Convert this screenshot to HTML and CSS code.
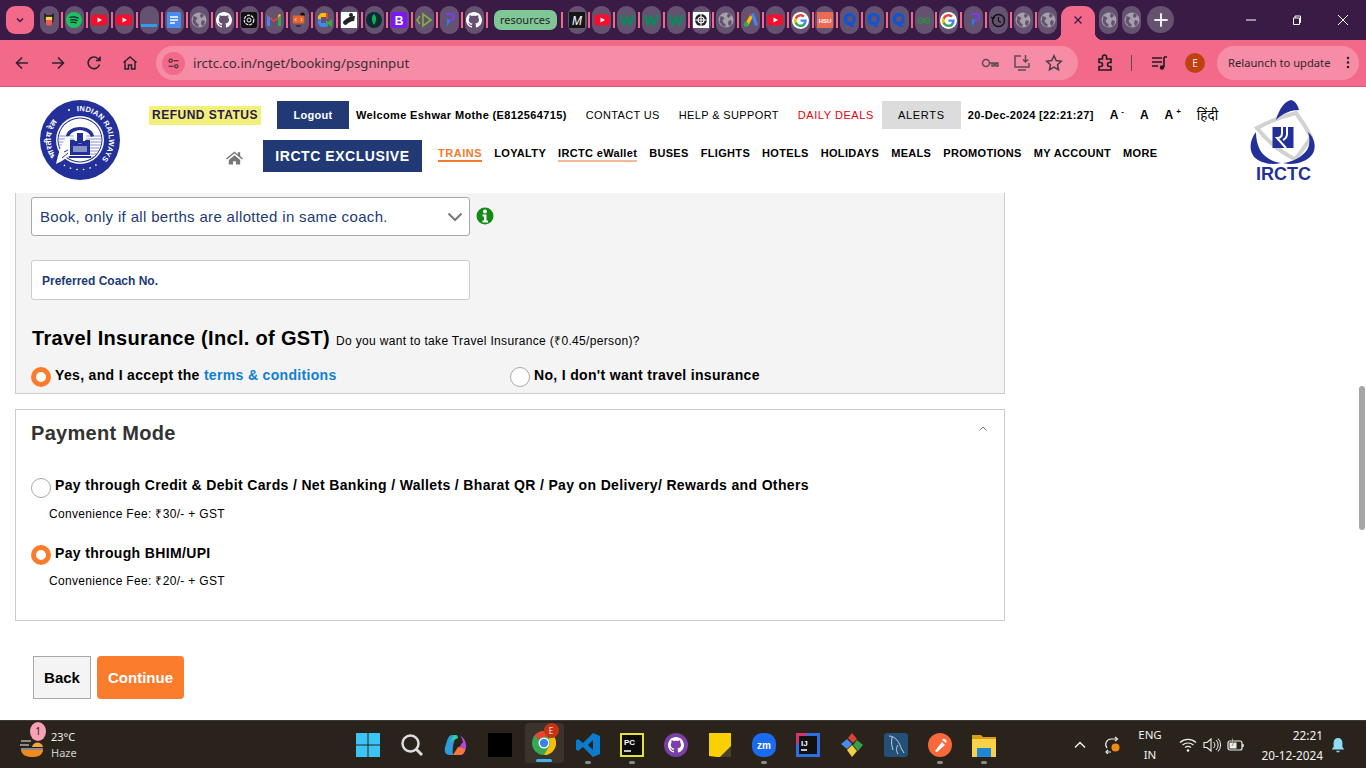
FILE: index.html
```html
<!DOCTYPE html>
<html lang="en">
<head>
    <meta charset="UTF-8">
    <meta name="viewport" content="width=device-width, initial-scale=1.0">
    <title>IRCTC Next Generation eTicketing System</title>
    <link rel="stylesheet" href="styles.css">
</head>
<body>
    <svg class="defs" width="0" height="0">
        <symbol id="globe" viewBox="0 0 16 16"><circle cx="8" cy="8" r="7.500" fill="#a5a0aa"/><path d="M2.500 4l3 1 1 2-2 1 1 3 2 1v3l-3-1-3-4zM10 1l3 2-1 2-2 1-1-2zM11 8l3 1-1 4-2 1-1-3z" fill="#655170"/></symbol>
        <symbol id="yt" viewBox="0 0 16 16"><rect y="2.500" width="16" height="11" rx="3" fill="#f50f2d"/><path d="M6.500 5.500v5L11 8z" fill="#fff"/></symbol>
        <symbol id="gh" viewBox="0 0 16 16"><path fill="#fff" d="M8 0C3.600 0 0 3.600 0 8c0 3.500 2.300 6.500 5.500 7.600.4.100.5-.2.500-.4v-1.400c-2.200.5-2.700-1-2.700-1-.4-.9-.9-1.200-.9-1.200-.7-.5.100-.5.100-.5.800.1 1.200.8 1.200.8.700 1.200 1.900.9 2.300.7.100-.5.300-.9.500-1.100-1.800-.2-3.700-.9-3.700-4 0-.9.300-1.600.8-2.100-.1-.2-.4-1 .1-2.100 0 0 .7-.2 2.200.8.600-.2 1.300-.3 2-.3s1.400.1 2 .3c1.500-1 2.200-.8 2.200-.8.500 1.100.2 1.900.1 2.100.5.600.8 1.300.8 2.100 0 3.100-1.900 3.700-3.700 3.900.3.300.6.800.6 1.500v2.200c0 .2.100.5.600.4C13.700 14.500 16 11.500 16 8c0-4.400-3.600-8-8-8z"/></symbol>
        <symbol id="wix" viewBox="0 0 16 16"><path d="M0 3h3l2 7 2-7h2l2 7 2-7h3l-4 11h-2L8 8l-2 6H4z" fill="#0c8a5e"/></symbol>
        <symbol id="quora" viewBox="0 0 16 16"><path d="M8 1a6 6 0 0 0-1 12l2 2h4l-3-2.500A6 6 0 0 0 8 1zm0 3a3 3 0 0 1 0 6 3 3 0 0 1 0-6z" fill="#0d55d8"/></symbol>
        <symbol id="google" viewBox="0 0 18 18"><circle cx="9" cy="9" r="9" fill="#fff"/><path d="M15.500 9.200c0-.5 0-.9-.1-1.300H9v2.500h3.700a3.200 3.200 0 0 1-1.400 2.100v1.700h2.200c1.300-1.200 2-3 2-5z" fill="#4285f4"/><path d="M9 16c1.900 0 3.400-.6 4.500-1.700l-2.200-1.700c-.6.400-1.400.7-2.300.7-1.800 0-3.300-1.200-3.800-2.800H2.900v1.800A7 7 0 0 0 9 16z" fill="#34a853"/><path d="M5.200 10.500a4 4 0 0 1 0-2.900V5.800H2.900a7 7 0 0 0 0 6.500z" fill="#fbbc05"/><path d="M9 4.800c1 0 1.900.4 2.600 1l1.900-1.900A7 7 0 0 0 2.900 5.800l2.300 1.800C5.700 6 7.200 4.800 9 4.800z" fill="#ea4335"/></symbol>
        <symbol id="dart" viewBox="0 0 16 16"><path d="M5 1h5a4 4 0 0 1 0 8H8V7h2a2 2 0 0 0 0-4H5z" fill="#7a3df0"/><path d="M6 6l3 3-3 6z" fill="#2a7df0"/></symbol>
    </svg>

    <div class="tabstrip">
        <div class="tabsearch"><svg class="ico10" viewBox="0 0 10 10"><path d="M2 3.500l3 3 3-3" fill="none" stroke="#3a1b46" stroke-width="1.500"/></svg></div>
        <div class="tabs">
            <div class="tab"><svg class="ico" viewBox="0 0 16 20"><path d="M2 1l3 3h6l3-3v8a6 7 0 0 1-12 0z" fill="#1c1c1c"/><path d="M4 6h8v5H4z" fill="#f8d24a"/><path d="M4 10h8v3a4 4 0 0 1-8 0z" fill="#ee5a5a"/></svg></div><i class="sep"></i>
            <div class="tab"><svg class="ico" viewBox="0 0 16 16"><circle cx="8" cy="8" r="8" fill="#1fc15b"/><path d="M3.500 5.500c3-1 6-.7 9 .8M4 8c2.500-.8 5-.5 7.500.8M4.500 10.500c2-.6 4.200-.4 6 .7" fill="none" stroke="#123" stroke-width="1.300"/></svg></div><i class="sep"></i>
            <div class="tab"><svg class="ico"><use href="#yt"/></svg></div><i class="sep"></i>
            <div class="tab"><svg class="ico"><use href="#yt"/></svg></div><i class="sep"></i>
            <div class="tab"><svg class="ico" viewBox="0 0 16 16"><rect y="12" width="16" height="3" fill="#2f9bea"/></svg></div><i class="sep"></i>
            <div class="tab"><svg class="ico" viewBox="0 0 16 16"><rect x="1" width="14" height="16" rx="1.500" fill="#4a8af4"/><path d="M4 5h8M4 8h8M4 11h5" stroke="#fff" stroke-width="1.400"/></svg></div><i class="sep"></i>
            <div class="tab"><svg class="ico"><use href="#globe"/></svg></div><i class="sep"></i>
            <div class="tab"><svg class="ico"><use href="#gh"/></svg></div><i class="sep"></i>
            <div class="tab"><svg class="ico" viewBox="0 0 16 16"><rect width="16" height="16" rx="2" fill="#111"/><circle cx="8" cy="8" r="4.800" fill="none" stroke="#eee" stroke-width="1.200" stroke-dasharray="3 1"/><circle cx="8" cy="8" r="2" fill="none" stroke="#eee"/></svg></div><i class="sep"></i>
            <div class="tab"><svg class="ico" viewBox="0 0 16 16"><path d="M1 3v11h3V7l4 3 4-3v7h3V3l-7 5z" fill="#ea4335"/><path d="M1 3l3 3v8H1z" fill="#4285f4"/><path d="M15 3l-3 3v8h3z" fill="#34a853"/><path d="M12 6l3-3-1-1-2 1z" fill="#fbbc05"/></svg></div><i class="sep"></i>
            <div class="tab"><svg class="ico" viewBox="0 0 16 18"><circle cx="12" cy="3" r="2.500" fill="#111"/><rect x="1" y="4" width="13" height="9" rx="1" fill="#e8642c"/><path d="M5 15h5v1.500H5z" fill="#222"/><path d="M5 7l-1.500 1.500L5 10M10 7l1.500 1.500L10 10" stroke="#fff" fill="none"/></svg></div><i class="sep"></i>
            <div class="tab"><svg class="ico" viewBox="0 0 16 16"><path d="M2 4l3-3h5v4H5v2H2z" fill="#fbbc05"/><path d="M2 7h3v4h5v4H5l-3-3z" fill="#4285f4"/><path d="M10 1h1a1 1 0 0 1 1 1v4l-2 2z" fill="#ea4335"/><path d="M10 8l2 2 4-3v8l-4-3v2l-2 1z" fill="#34a853"/></svg></div><i class="sep"></i>
            <div class="tab"><svg class="ico" viewBox="0 0 16 16"><rect width="16" height="16" fill="#fff"/><path d="M2 10c3-4 8-6 12-6l-1 5c-3 0-6 2-8 4-2 0-3-1-3-3z" fill="#222"/><circle cx="10" cy="3" r="2" fill="#222"/></svg></div><i class="sep"></i>
            <div class="tab"><svg class="ico" viewBox="0 0 16 16"><circle cx="8" cy="8" r="8" fill="#0c2b33"/><path d="M8 2c2.500 2.500 3 6 0 11-3-5-2.500-8.500 0-11z" fill="#12b054"/></svg></div><i class="sep"></i>
            <div class="tab"><svg class="ico" viewBox="0 0 16 16"><rect width="16" height="16" rx="2.500" fill="#7b18f5"/><text x="8" y="12.500" class="tabletter">B</text></svg></div><i class="sep"></i>
            <div class="tab"><svg class="ico" viewBox="0 0 16 16"><path d="M4 4L1 8l3 4M7 2v12l8-6z" fill="none" stroke="#7eb63f" stroke-width="1.600"/></svg></div><i class="sep"></i>
            <div class="tab"><svg class="ico"><use href="#dart"/></svg></div><i class="sep"></i>
            <div class="tab"><svg class="ico"><use href="#gh"/></svg></div><i class="sep"></i>
            <div class="tabgroup">resources</div><i class="sep"></i>
        </div>
        <div class="tabs tabs2">
            <div class="tab"><svg class="ico" viewBox="0 0 16 16"><rect width="16" height="16" fill="#161616"/><text x="8" y="12.500" class="tabletter mono">M</text></svg></div><i class="sep"></i>
            <div class="tab"><svg class="ico"><use href="#yt"/></svg></div><i class="sep"></i>
            <div class="tab"><svg class="ico"><use href="#wix"/></svg></div><i class="sep"></i>
            <div class="tab"><svg class="ico"><use href="#wix"/></svg></div><i class="sep"></i>
            <div class="tab"><svg class="ico"><use href="#wix"/></svg></div><i class="sep"></i>
            <div class="tab"><svg class="ico" viewBox="0 0 16 16"><rect width="16" height="16" fill="#fff"/><circle cx="8" cy="8" r="6" fill="#222"/><circle cx="8" cy="8" r="3" fill="none" stroke="#fff" stroke-width="1.200"/><path d="M8 2v12M2 8h12" stroke="#fff"/></svg></div><i class="sep"></i>
            <div class="tab"><svg class="ico"><use href="#globe"/></svg></div><i class="sep"></i>
            <div class="tab"><svg class="ico" viewBox="0 0 16 16"><path d="M1 14L7 3l3 2-5 9z" fill="#fbbc05"/><path d="M8 2l3-1 4 12-3 1z" fill="#4285f4"/><circle cx="3" cy="12.500" r="2.400" fill="#34a853"/><path d="M6 1l2 2-1 2z" fill="#ea4335"/></svg></div><i class="sep"></i>
            <div class="tab"><svg class="ico"><use href="#yt"/></svg></div><i class="sep"></i>
            <div class="tab"><svg class="ico g18"><use href="#google"/></svg></div><i class="sep"></i>
            <div class="tab"><svg class="ico" viewBox="0 0 16 16"><rect width="16" height="16" fill="#e96a55"/><text x="8" y="11" class="tabletter tiny">HSU</text></svg></div><i class="sep"></i>
            <div class="tab"><svg class="ico"><use href="#quora"/></svg></div><i class="sep"></i>
            <div class="tab"><svg class="ico"><use href="#quora"/></svg></div><i class="sep"></i>
            <div class="tab"><svg class="ico"><use href="#quora"/></svg></div><i class="sep"></i>
            <div class="tab"><svg class="ico" viewBox="0 0 16 16"><path d="M1 9h14M8 9c-1-4-6-4-6 0s5 3 6 0c1 3 6 4 6 0s-5-4-6 0z" fill="none" stroke="#2f8d46" stroke-width="1.200"/></svg></div><i class="sep"></i>
            <div class="tab"><svg class="ico g18"><use href="#google"/></svg></div><i class="sep"></i>
            <div class="tab"><svg class="ico"><use href="#dart"/></svg></div><i class="sep"></i>
            <div class="tab"><svg class="ico" viewBox="0 0 16 16"><circle cx="8.500" cy="8.500" r="6" fill="none" stroke="#111" stroke-width="1.400"/><path d="M8.500 5v4l2.500 1.500M1 5l2 2 2-2" fill="none" stroke="#111" stroke-width="1.200"/></svg></div><i class="sep"></i>
            <div class="tab"><svg class="ico"><use href="#globe"/></svg></div><i class="sep"></i>
            <div class="tab"><svg class="ico"><use href="#globe"/></svg></div>
        </div>
        <div class="tab-active"><svg class="ico10" viewBox="0 0 10 10"><path d="M1.500 1.500l7 7M8.500 1.500l-7 7" stroke="#3a1b46" stroke-width="1.300"/></svg></div>
        <div class="tabs tabs3">
            <div class="tab"><svg class="ico"><use href="#globe"/></svg></div>
            <div class="tab"><svg class="ico"><use href="#globe"/></svg></div>
        </div>
        <div class="newtab"><svg class="ico" viewBox="0 0 12 12"><path d="M6 1v10M1 6h10" stroke="#eee" stroke-width="1.500"/></svg></div>
        <div class="winbtns">
            <div class="winbtn"><svg class="ico10" viewBox="0 0 10 10"><path d="M0 5h10" stroke="#fff"/></svg></div>
            <div class="winbtn"><svg class="ico10" viewBox="0 0 10 10"><path d="M1.500 3h6v6.500h-6zM3 3V1h5.500v6.500H7.500" fill="none" stroke="#fff"/></svg></div>
            <div class="winbtn"><svg class="ico10" viewBox="0 0 10 10"><path d="M0 0l10 10M10 0L0 10" stroke="#fff"/></svg></div>
        </div>
    </div>

    <div class="toolbar">
        <div class="navbtn"><svg class="ico16" viewBox="0 0 16 16"><path d="M14 8H2.500M8 2.500L2.500 8 8 13.500" fill="none" stroke="#2b2430" stroke-width="1.600"/></svg></div>
        <div class="navbtn"><svg class="ico16" viewBox="0 0 16 16"><path d="M2 8h11.500M8 2.500L13.500 8 8 13.500" fill="none" stroke="#2b2430" stroke-width="1.600"/></svg></div>
        <div class="navbtn"><svg class="ico16" viewBox="0 0 16 16"><path d="M13.500 9.500A5.800 5.800 0 1 1 12 3.700L14 5.500M14 1.500v4h-4" fill="none" stroke="#2b2430" stroke-width="1.600"/></svg></div>
        <div class="navbtn"><svg class="ico16" viewBox="0 0 16 16"><path d="M1.500 7.500L8 2l6.500 5.500M3 6.500V14h3.500v-4h3v4H13V6.500" fill="none" stroke="#2b2430" stroke-width="1.500"/></svg></div>
        <div class="omnibox">
            <div class="siteinfo"><svg class="ico16" viewBox="0 0 16 16"><circle cx="4.500" cy="4.500" r="2" fill="none" stroke="#2b2430" stroke-width="1.300"/><path d="M8 4.500h6M2 11.500h6" stroke="#2b2430" stroke-width="1.300"/><circle cx="11.500" cy="11.500" r="2" fill="none" stroke="#2b2430" stroke-width="1.300"/></svg></div>
            <span class="url">irctc.co.in/nget/booking/psgninput</span>
            <div class="omni-icons">
                <svg class="ico18" viewBox="0 0 18 18"><circle cx="5" cy="9" r="3.500" fill="none" stroke="#5c4a55" stroke-width="1.500"/><path d="M8.500 9H17v3h-2v-1.500h-2V12h-2V9.500" fill="none" stroke="#5c4a55" stroke-width="1.400"/></svg>
                <svg class="ico18" viewBox="0 0 18 18"><path d="M8 2H2v11h14V9M5 16h8" fill="none" stroke="#5c4a55" stroke-width="1.500"/><path d="M12.500 1v7M10 5.500L12.500 8 15 5.500" fill="none" stroke="#5c4a55" stroke-width="1.500"/></svg>
                <svg class="ico18" viewBox="0 0 18 18"><path d="M9 1.800l2.200 4.800 5 .6-3.700 3.500 1 5.100L9 13.200l-4.500 2.600 1-5.100L1.800 7.200l5-.6z" fill="none" stroke="#4a3b45" stroke-width="1.500"/></svg>
            </div>
        </div>
        <svg class="ext ico18" viewBox="0 0 18 18"><path d="M3 5h3.500V3a2 2 0 0 1 4 0v2H15v3.500h-1.500a2 2 0 0 0 0 4H15V16H3v-3.500h1.500a2 2 0 0 0 0-4H3z" fill="none" stroke="#1f1a20" stroke-width="1.600"/></svg>
        <i class="tooldiv"></i>
        <svg class="media ico18" viewBox="0 0 18 18"><path d="M2 4h10M2 8h10M2 12h6" stroke="#1f1a20" stroke-width="1.600"/><path d="M14 3v10M14 3h3" stroke="#1f1a20" stroke-width="1.600"/><circle cx="12" cy="13.500" r="2.200" fill="#1f1a20"/></svg>
        <div class="avatar">E</div>
        <div class="relaunch"><span>Relaunch to update</span><svg class="dots" viewBox="0 0 4 16"><circle cx="2" cy="2.500" r="1.500"/><circle cx="2" cy="8" r="1.500"/><circle cx="2" cy="13.500" r="1.500"/></svg></div>
    </div>

    <div class="page">
        <div class="viewport">
            <header class="site-header">
                <svg class="rail-logo" viewBox="0 0 80 80">
                    <defs>
                        <path id="rail-en" d="M37 11.200A29 29 0 0 1 57 63.500"/>
                        <path id="rail-hi" d="M16.200 56.600A29 29 0 0 1 32.500 12"/>
                        <clipPath id="rail-inner"><circle cx="40" cy="40" r="21.500"/></clipPath>
                    </defs>
                    <circle cx="40" cy="40" r="40" fill="#23309a"/>
                    <circle cx="40" cy="40" r="24" fill="#fff"/>
                    <circle cx="40" cy="40" r="22.500" fill="#23309a"/>
                    <g clip-path="url(#rail-inner)">
                        <rect x="18" y="18" width="44" height="44" fill="#fff"/>
                        <path d="M18 36h44M18 39h44M18 42h44M18 45h44M18 48h44M18 51h44M18 54h44M18 57h44" stroke="#8a90c8" stroke-width="1"/>
                    </g>
                    <path d="M26 36c2-12 26-12 28 0l-3 1c-3-9-19-9-22 0z" fill="#23309a"/>
                    <path d="M30 40h20v15H30z" fill="#23309a"/>
                    <circle cx="40" cy="37" r="6.500" fill="#fff"/>
                    <path d="M37 33h6v8h-6zM35 41h10v2H35z" fill="#23309a"/>
                    <path d="M33 46h14v6H33z" fill="#8a90c8"/>
                    <path d="M29 56h22v2H29z" fill="#23309a"/>
                    <path d="M16 64l6-3 8-6V36l-4 1C21 45 18 54 16 64z" fill="#fff"/>
                    <path d="M22 58l6-5M24 52l4-2" stroke="#23309a" stroke-width="1"/>
                    <path d="M56 65A30 30 0 0 1 17 59" fill="none" stroke="#fff" stroke-width="1.600" stroke-linecap="round" stroke-dasharray=".1 6.500"/>
                    <circle cx="29" cy="10" r="1" fill="#fff"/>
                    <text class="rail-text"><textPath href="#rail-en">INDIAN RAILWAYS</textPath></text>
                    <text class="rail-text hi"><textPath href="#rail-hi">भारतीय रेल</textPath></text>
                </svg>
                <div class="header-mid">
                    <div class="top-row">
                        <span class="refund">REFUND STATUS</span>
                        <span class="logout">Logout</span>
                        <span class="welcome">Welcome Eshwar Mothe (E812564715)</span>
                        <span class="toplink contact">CONTACT US</span>
                        <span class="toplink help">HELP &amp; SUPPORT</span>
                        <span class="toplink deals">DAILY DEALS</span>
                        <span class="alerts">ALERTS</span>
                        <span class="clock">20-Dec-2024 [22:21:27]</span>
                        <span class="fontsize a1">A <sup>-</sup></span>
                        <span class="fontsize a2">A</span>
                        <span class="fontsize a3">A <sup>+</sup></span>
                        <span class="hindi">हिंदी</span>
                    </div>
                    <nav class="main-nav">
                        <svg class="home" viewBox="0 0 18 14"><path d="M9 0L0 7.500l1 1.200L9 2l8 6.700 1-1.200-3-2.500V1h-2.500v2.200z" fill="#777"/><path d="M3 9l6-5 6 5v5h-4.500v-3.500h-3V14H3z" fill="#777"/></svg>
                        <span class="exclusive">IRCTC EXCLUSIVE</span>
                        <a class="nav-item trains">TRAINS</a>
                        <a class="nav-item">LOYALTY</a>
                        <a class="nav-item wallet">IRCTC eWallet</a>
                        <a class="nav-item">BUSES</a>
                        <a class="nav-item">FLIGHTS</a>
                        <a class="nav-item">HOTELS</a>
                        <a class="nav-item">HOLIDAYS</a>
                        <a class="nav-item">MEALS</a>
                        <a class="nav-item">PROMOTIONS</a>
                        <a class="nav-item">MY ACCOUNT</a>
                        <a class="nav-item">MORE</a>
                    </nav>
                </div>
                <div class="irctc-logo">
                    <svg viewBox="8 5 67 64" class="irctc-mark">
                        <path d="M17 33C30 26 43 21 56 18 62 26 67 34 71 42 66 50 61 58 55 64 42 58 29 48 17 33z" fill="none" stroke="#d2d2d2" stroke-width="4"/>
                        <path d="M36 25C39 14 45 6 51 5 55 6 58 10 59 15 51 15 43 18 36 25z" fill="#23309a"/>
                        <path d="M16 37C8 47 9 60 18 65 25 69 33 70 41 68 32 67 24 62 20 55 17 49 16 43 16 37z" fill="#23309a"/>
                        <path d="M68 37C76 44 77 56 70 62 62 69 52 70 43 68 53 67 62 62 67 55 70 50 70 43 68 37z" fill="#23309a"/>
                        <rect x="32.500" y="32" width="21" height="21" fill="#23309a"/>
                        <path d="M42 32v6c0 4-2 5-5 5l9 10M47 32v7c0 3-2 5-4 6" fill="none" stroke="#fff" stroke-width="2"/>
                    </svg>
                    <span class="irctc-name">IRCTC</span>
                </div>
            </header>

            <main class="content">
                <section class="panel panel-grey">
                    <div class="select-row">
                        <div class="select-box">
                            <span>Book, only if all berths are allotted in same coach.</span>
                            <svg class="select-arrow" viewBox="0 0 16 10"><path d="M1.500 1.500L8 8l6.500-6.500" fill="none" stroke="#777" stroke-width="2"/></svg>
                        </div>
                        <svg class="info" viewBox="0 0 18 18"><circle cx="9" cy="9" r="8.500" fill="#138a13"/><circle cx="9" cy="4.500" r="2" fill="#fff"/><path d="M6.500 7.500h4v6h1.500v2H6.500v-2H8v-4H6.500z" fill="#fff"/></svg>
                    </div>
                    <div class="coach-input">Preferred Coach No.</div>
                    <div class="insurance-head">
                        <h3>Travel Insurance (Incl. of GST)</h3>
                        <span>Do you want to take Travel Insurance (₹0.45/person)?</span>
                    </div>
                    <div class="insurance-opts">
                        <label class="opt opt-yes"><i class="radio on"></i><b>Yes, and I accept the <a class="terms">terms &amp; conditions</a></b></label>
                        <label class="opt"><i class="radio"></i><b>No, I don't want travel insurance</b></label>
                    </div>
                </section>

                <section class="panel panel-pay">
                    <div class="pay-head">
                        <h2>Payment Mode</h2>
                        <svg class="collapse" viewBox="0 0 10 10"><path d="M1.500 6.500L5 3l3.500 3.500" fill="none" stroke="#777"/></svg>
                    </div>
                    <div class="pay-opt pay-card">
                        <i class="radio"></i>
                        <b>Pay through Credit &amp; Debit Cards / Net Banking / Wallets / Bharat QR / Pay on Delivery/ Rewards and Others</b>
                    </div>
                    <p class="fee">Convenience Fee: ₹30/- + GST</p>
                    <div class="pay-opt pay-upi">
                        <i class="radio on"></i>
                        <b>Pay through BHIM/UPI</b>
                    </div>
                    <p class="fee">Convenience Fee: ₹20/- + GST</p>
                </section>

                <div class="actions">
                    <button class="btn-back">Back</button>
                    <button class="btn-continue">Continue</button>
                </div>
            </main>
        </div>
        <div class="scrollbar"><div class="thumb"></div></div>
    </div>

    <footer class="taskbar">
        <div class="weather">
            <svg class="weather-icon" viewBox="0 0 24 24"><path d="M2 8h10M1 12h9M2 16h22a11 8 0 0 1-21 0z" fill="none" stroke="#8a8a8a" stroke-width="2"/><path d="M2 17h22c-1 6-5 7-11 7S3 22 2 17z" fill="#f08a1d"/><path d="M13 14c1-6 10-6 11 0z" fill="#f2a93b"/></svg>
            <span class="weather-badge">1</span>
            <div class="weather-text"><span>23°C</span><span class="dim">Haze</span></div>
        </div>
        <div class="task-icons">
            <div class="task"><svg class="ico24" viewBox="0 0 24 24"><path d="M0 0h11.500v11.500H0zM12.500 0H24v11.500H12.500zM0 12.500h11.500V24H0zM12.500 12.500H24V24H12.500z" fill="#3cc4f5"/></svg></div>
            <div class="task"><svg class="ico24" viewBox="0 0 24 24"><circle cx="10.500" cy="10.500" r="8" fill="none" stroke="#ddd" stroke-width="2.500"/><path d="M16.500 16.500L22 22" stroke="#ddd" stroke-width="3"/></svg></div>
            <div class="task"><svg class="ico24" viewBox="0 0 24 24"><path d="M8 2h5c-3 5-5 12-4 20H5c-5-1-5-5-3-11S5 2 8 2z" fill="#2e9bdc"/><path d="M13 2c3 0 4 1 5 4l1 3-10 13h7c3 0 5-3 6-7 1-6-3-13-9-13z" fill="#b04bd0"/><path d="M9 22h7c3 0 5-3 5-6l-7-2z" fill="#f5773c"/><path d="M6 9c1-3 3-6 5-7 2 0 3 1 3 3z" fill="#2ed0a0"/></svg></div>
            <div class="task"><div class="black-square"></div></div>
            <div class="task task-active"><svg class="ico24" viewBox="0 0 24 24"><circle cx="12" cy="12" r="12" fill="#34a853"/><path d="M12 0a12 12 0 0 1 10.400 6H12a6 6 0 0 0-5.200 3L2.600 4.500A12 12 0 0 1 12 0z" fill="#ea4335"/><path d="M22.400 6A12 12 0 0 1 12 24l5.200-9a6 6 0 0 0-.9-7z" fill="#fbbc05"/><circle cx="12" cy="12" r="5.500" fill="#fff"/><circle cx="12" cy="12" r="4.200" fill="#3b82e8"/></svg><span class="chrome-badge">E</span><i class="run-active"></i></div>
            <div class="task"><svg class="ico24" viewBox="0 0 24 24"><path d="M17 0l7 3v18l-7 3L7 14l-5 4-2-1.500V7.500L2 6l5 4zM17 7l-5 5 5 5z" fill="#0a7ccf"/></svg><i class="run"></i></div>
            <div class="task"><svg class="ico24" viewBox="0 0 24 24"><rect width="24" height="24" fill="#e3e23a"/><rect x="2" y="2" width="20" height="20" fill="#0c0c0c"/><text x="4" y="12" class="pc">PC</text><path d="M4 18h7" stroke="#fff" stroke-width="1.500"/></svg><i class="run"></i></div>
            <div class="task"><svg class="ico24" viewBox="0 0 24 24"><circle cx="12" cy="12" r="12" fill="#7a3fa8"/><svg x="4" y="4" width="16" height="16"><use href="#gh"/></svg></svg></div>
            <div class="task"><svg class="ico24" viewBox="0 0 24 24"><path d="M1 0h22v24H9l-8-1z" fill="#fbd000"/><path d="M23 13v11H12z" fill="#4a4030"/></svg></div>
            <div class="task"><svg class="ico24" viewBox="0 0 24 24"><rect width="24" height="24" rx="10" fill="#1a6bf2"/><text x="12" y="16" class="zm">zm</text></svg><i class="run"></i></div>
            <div class="task"><svg class="ico24" viewBox="0 0 24 24"><rect width="24" height="24" fill="#2d6fe0"/><path d="M0 0h12L0 12z" fill="#d6336c"/><rect x="3" y="3" width="18" height="18" fill="#111"/><text x="5" y="12.500" class="pc">IJ</text><path d="M5 17h6" stroke="#fff" stroke-width="1.500"/></svg></div>
            <div class="task"><svg class="ico24" viewBox="0 0 24 24"><path d="M12 0l5 6-4 4-5-5z" fill="#d8433a"/><path d="M7 6l5 5-5 5-6-5z" fill="#4a8be8"/><path d="M17 7l6 5-5 6-5-6z" fill="#38a048"/><path d="M7 17l5-5 5 6-5 6z" fill="#f3cf45"/></svg></div>
            <div class="task"><svg class="ico24" viewBox="0 0 24 24"><rect width="24" height="24" rx="3" fill="#234f78"/><path d="M5 3c7 0 11 8 12 12l3 5M14 12c-2 3-2 6 0 9M8 4c-1 6 0 10 1 13" fill="none" stroke="#c9d6df"/></svg></div>
            <div class="task"><svg class="ico24" viewBox="0 0 24 24"><circle cx="12" cy="12" r="12" fill="#f7683a"/><path d="M7 18l7-9 3 3-8 7zM14 7a2.500 2.500 0 1 1 4 3z" fill="#fff"/></svg><i class="run"></i></div>
            <div class="task"><svg class="ico24" viewBox="0 0 24 24"><path d="M0 2h9l2 2h13v20H0z" fill="#d89f12"/><path d="M0 6h24v18H0z" fill="#fbd14b"/><rect x="5" y="15" width="14" height="9" fill="#1e88d4"/></svg><i class="run"></i></div>
        </div>
        <div class="tray">
            <svg class="tray-chevron" viewBox="0 0 12 8"><path d="M1 6.500L6 1.500l5 5" fill="none" stroke="#eee" stroke-width="1.500"/></svg>
            <svg class="tray-sync" viewBox="0 0 18 18"><path d="M14 3H8a5.500 5.500 0 0 0-4 9M3 16h5" fill="none" stroke="#eee" stroke-width="1.200"/><path d="M12 1l2.500 2L12 5M5 14l-2 2 2 2" fill="none" stroke="#eee" stroke-width="1.200"/><circle cx="12.500" cy="11.500" r="4" fill="#f08a10"/></svg>
            <div class="lang"><span>ENG</span><span>IN</span></div>
            <svg class="tray-icon" viewBox="0 0 18 16"><path d="M1 5.500a12 12 0 0 1 16 0M3.500 8a8.500 8.500 0 0 1 11 0M6 10.500a5 5 0 0 1 6 0" fill="none" stroke="#eee" stroke-width="1.200"/><circle cx="9" cy="13.500" r="1.300" fill="#eee"/></svg>
            <svg class="tray-icon" viewBox="0 0 18 16"><path d="M1 5.500h3L8 2v12l-4-3.500H1z" fill="none" stroke="#eee" stroke-width="1.100"/><path d="M10.500 5a4 4 0 0 1 0 6M13 3a7 7 0 0 1 0 10M15 1.500a9.500 9.500 0 0 1 0 13" fill="none" stroke="#eee"/></svg>
            <svg class="tray-icon" viewBox="0 0 18 16"><rect x="1" y="4" width="14" height="9" rx="2" fill="none" stroke="#eee" stroke-width="1.200"/><rect x="2.500" y="5.500" width="7" height="6" fill="#eee"/><path d="M16 7v3" stroke="#eee" stroke-width="1.500"/><path d="M6 0L4 5h3L5 9" fill="#eee" stroke="#2a231b" stroke-width=".5"/></svg>
            <div class="datetime"><span>22:21</span><span>20-12-2024</span></div>
            <svg class="tray-bell" viewBox="0 0 16 18"><path d="M8 1a5 5 0 0 0-5 5v5l-2 3h14l-2-3V6a5 5 0 0 0-5-5z" fill="#8fdcf7"/><path d="M6 15.500h4a2 2 0 0 1-4 0z" fill="#8fdcf7"/></svg>
        </div>
    </footer>
</body>
</html>
```

FILE: styles.css
```css
* {
    box-sizing: border-box;
}
html, body {
    margin: 0;
    height: 768px;
    overflow: hidden;
}
body {
    width: 1366px;
    display: flex;
    flex-direction: column;
    font-family: "Liberation Sans", Arial, sans-serif;
    background: #fff;
    color: #000;
}
.defs {
    display: block;
    height: 0;
}
i {
    font-style: normal;
}

/* browser tab strip */
.tabstrip {
    height: 40px;
    flex: none;
    display: flex;
    align-items: flex-start;
    padding: 6px 0 0 6px;
    background: #3a1b46;
}
.tabstrip > * {
    flex: none;
}
.tabsearch {
    width: 28px;
    height: 28px;
    border-radius: 9px;
    background: #f3698a;
    display: flex;
    align-items: center;
    justify-content: center;
    margin-right: 5.600px;
}
.ico10 {
    width: 10px;
    height: 10px;
}
.tabs {
    display: flex;
    align-items: center;
    gap: 2px;
    height: 28px;
}
.tabs2 {
    gap: 1.900px;
    margin-left: 5px;
}
.tabs3 {
    gap: 4px;
    margin-left: 4px;
}
.tab {
    flex: none;
    width: 19px;
    height: 28px;
    border-radius: 9px;
    background: #655170;
    display: flex;
    align-items: center;
    justify-content: center;
}
.ico {
    width: 16px;
    height: 16px;
}
.g18 {
    width: 17px;
    height: 17px;
}
.sep {
    flex: none;
    width: 2px;
    height: 16px;
    background: #f3698a;
}
.tabgroup {
    flex: none;
    width: 63px;
    height: 20px;
    margin: 0 2px 0 4px;
    border-radius: 7px;
    background: #7fc794;
    color: #2c2230;
    font: 11px/20px "Noto Sans", sans-serif;
    text-align: center;
}
.tabletter {
    font: bold 12px "Liberation Sans", sans-serif;
    fill: #fff;
    text-anchor: middle;
}
.tabletter.mono {
    font-style: italic;
    font-weight: normal;
}
.tabletter.tiny {
    font-size: 6px;
}
.tab-active {
    position: relative;
    width: 34px;
    height: 34px;
    margin-left: 4px;
    background: #f3698a;
    border-radius: 11px 11px 0 0;
    display: flex;
    align-items: center;
    justify-content: center;
    padding-bottom: 6px;
}
.tab-active::before,
.tab-active::after {
    content: "";
    position: absolute;
    bottom: 0;
    width: 8px;
    height: 8px;
}
.tab-active::before {
    left: -8px;
    background: radial-gradient(circle at 0 0, transparent 8px, #f3698a 8.500px);
}
.tab-active::after {
    right: -8px;
    background: radial-gradient(circle at 100% 0, transparent 8px, #f3698a 8.500px);
}
.newtab {
    width: 27px;
    height: 27px;
    margin-left: 6px;
    border-radius: 50%;
    background: #655170;
    display: flex;
    align-items: center;
    justify-content: center;
}
.winbtns {
    display: flex;
    margin-left: auto;
    height: 28px;
}
.winbtn {
    width: 46px;
    display: flex;
    align-items: center;
    justify-content: center;
}

/* browser toolbar */
.toolbar {
    height: 47px;
    flex: none;
    display: flex;
    align-items: center;
    padding: 0 8px 0 4px;
    background: #f3698a;
    border-bottom: 1px solid #d9577a;
}
.toolbar > * {
    flex: none;
}
.navbtn {
    width: 36px;
    height: 34px;
    display: flex;
    align-items: center;
    justify-content: center;
}
.ico16 {
    width: 16px;
    height: 16px;
}
.ico18 {
    width: 18px;
    height: 18px;
}
.omnibox {
    width: 922px;
    height: 34px;
    margin-left: 8px;
    display: flex;
    align-items: center;
    padding: 0 15px 0 6px;
    border-radius: 17px;
    background: #f68ca5;
}
.siteinfo {
    width: 23px;
    height: 23px;
    border-radius: 50%;
    background: #f3698a;
    display: flex;
    align-items: center;
    justify-content: center;
}
.siteinfo .ico16 {
    width: 13px;
    height: 13px;
}
.url {
    margin-left: 8px;
    font: 13.200px "Noto Sans", sans-serif;
    color: #3c2c38;
}
.omni-icons {
    margin-left: auto;
    display: flex;
    gap: 14px;
}
.ext {
    margin-left: 18px;
}
.tooldiv {
    width: 1px;
    height: 16px;
    margin-left: 17px;
    background: #5c4a55;
}
.media {
    margin-left: 18px;
}
.avatar {
    width: 20px;
    height: 20px;
    margin-left: 17px;
    border-radius: 50%;
    background: #c0410f;
    color: #fde;
    font: 10px/20px "Noto Sans", sans-serif;
    text-align: center;
}
.relaunch {
    width: 142px;
    height: 34px;
    margin-left: 12px;
    padding: 0 9px 2px 11px;
    display: flex;
    align-items: center;
    justify-content: space-between;
    border-radius: 17px;
    background: #f68ca5;
    font: 11.200px "Noto Sans", sans-serif;
    color: #33262f;
    white-space: nowrap;
}
.dots {
    width: 4px;
    height: 13px;
    fill: #222;
}

/* page */
.page {
    flex: 1;
    min-height: 0;
    display: flex;
}
.viewport {
    flex: 1;
    min-width: 0;
}
.scrollbar {
    width: 8px;
    padding: 299px 1px 0;
    background: #fff;
}
.thumb {
    height: 144px;
    border-radius: 3px;
    background: #a6a6a6;
}

/* site header */
.site-header {
    height: 106px;
    display: flex;
    padding: 13px 0 0 40px;
}
.rail-logo {
    width: 80px;
    height: 80px;
    flex: none;
}
.rail-text {
    font: bold 7.500px "Liberation Sans", sans-serif;
    fill: #fff;
    letter-spacing: .2px;
}
.rail-text.hi {
    font: bold 8px "Noto Sans", "Noto Sans Devanagari", sans-serif;
}
.header-mid {
    width: 1128px;
    flex: none;
    padding-left: 29px;
    margin-top: 1px;
}
.top-row {
    display: flex;
    align-items: center;
    height: 28px;
    font-size: 11px;
    white-space: nowrap;
}
.refund {
    width: 112px;
    height: 19px;
    background: #f0f07a;
    color: #2b1a4a;
    font-size: 12px;
    font-weight: bold;
    line-height: 19px;
    letter-spacing: .5px;
    text-align: center;
}
.logout {
    width: 72px;
    height: 28px;
    margin-left: 16px;
    background: #213a76;
    color: #fff;
    font-weight: bold;
    line-height: 28px;
    letter-spacing: .3px;
    text-align: center;
}
.welcome {
    margin-left: 7px;
    font-weight: bold;
    letter-spacing: .37px;
}
.toplink {
    letter-spacing: .36px;
}
.contact {
    margin-left: 19px;
}
.help {
    margin-left: 19px;
}
.deals {
    margin-left: 19px;
    color: #e8000c;
    letter-spacing: .55px;
}
.alerts {
    flex: none;
    width: 79px;
    height: 28px;
    margin-left: 8px;
    background: #dcdcdc;
    line-height: 28px;
    letter-spacing: .7px;
    text-align: center;
}
.clock {
    margin-left: 7px;
    font-weight: bold;
    letter-spacing: .33px;
}
.fontsize {
    font-weight: bold;
    font-size: 12px;
}
.fontsize sup {
    font-size: 8px;
    line-height: 0;
}
.a1 {
    margin-left: 16px;
}
.a2 {
    margin-left: 16px;
}
.a3 {
    margin-left: 16px;
}
.hindi {
    margin-left: 16px;
    font: 13.500px "Noto Sans", "Noto Sans Devanagari", sans-serif;
}
.main-nav {
    display: flex;
    align-items: center;
    height: 32px;
    margin-top: 11px;
    padding-left: 77px;
    white-space: nowrap;
}
.home {
    width: 17px;
    height: 14px;
    margin-top: 4px;
}
.exclusive {
    width: 159px;
    height: 32px;
    margin-left: 20px;
    background: #213a76;
    color: #fff;
    font-size: 14px;
    font-weight: bold;
    line-height: 32px;
    letter-spacing: .55px;
    text-align: center;
}
.nav-item {
    margin-left: 12px;
    margin-top: -4px;
    font-size: 11px;
    font-weight: bold;
    line-height: 14px;
    letter-spacing: .33px;
    border-bottom: 2px solid transparent;
}
.exclusive + .nav-item {
    margin-left: 16px;
}
.trains {
    color: #f27a2c;
    letter-spacing: .55px;
    border-bottom-color: #f27a2c;
}
.wallet {
    border-bottom-color: #f8b996;
}
.irctc-logo {
    width: 67px;
    display: flex;
    flex-direction: column;
    align-items: center;
}
.irctc-mark {
    width: 67px;
    height: 64px;
}
.irctc-name {
    margin-top: 2px;
    margin-left: 4px;
    color: #23309a;
    font-size: 18px;
    font-weight: bold;
    line-height: 16px;
}

/* booking panels */
.content {
    width: 1005px;
    padding-left: 15px;
}
.panel {
    width: 990px;
    border: 1px solid #ccc;
}
.panel-grey {
    height: 201px;
    padding: 4px 15px 0;
    background: #f4f4f4;
    border-top: none;
}
.select-row {
    display: flex;
    align-items: center;
    gap: 6px;
}
.select-box {
    width: 439px;
    height: 39px;
    padding: 0 6px 0 8px;
    display: flex;
    align-items: center;
    justify-content: space-between;
    background: #fff;
    border: 1px solid #a8a8a8;
    border-radius: 3px;
    color: #213a76;
    font-size: 15px;
    letter-spacing: .34px;
}
.select-arrow {
    width: 16px;
    height: 10px;
}
.info {
    width: 18px;
    height: 18px;
    margin-top: -2px;
}
.coach-input {
    width: 439px;
    height: 40px;
    margin-top: 24px;
    padding-left: 10px;
    background: #fff;
    border: 1px solid #ccc;
    border-radius: 3px;
    color: #213a76;
    font-size: 12px;
    font-weight: bold;
    line-height: 40px;
}
.insurance-head {
    display: flex;
    align-items: baseline;
    gap: 6px;
    height: 24px;
    margin-top: 26px;
    padding-left: 1px;
}
.insurance-head h3 {
    margin: 0;
    font-size: 20px;
    line-height: 24px;
    letter-spacing: .33px;
}
.insurance-head span {
    font-size: 12px;
    letter-spacing: .33px;
}
.insurance-opts {
    display: flex;
    margin-top: 17px;
}
.opt {
    display: flex;
    gap: 4px;
    height: 20px;
    font-size: 14px;
    line-height: 16px;
    letter-spacing: .33px;
}
.opt-yes {
    width: 479px;
}
.terms {
    color: #0f7fd8;
}
.radio {
    width: 20px;
    height: 20px;
    flex: none;
    border: 1px solid #a8a8a8;
    border-radius: 50%;
    background: #fff;
}
.radio.on {
    border: 5.500px solid #fb7c2c;
}
.panel-pay {
    height: 212px;
    margin-top: 15px;
    padding: 0 15px;
    background: #fff;
}
.pay-head {
    display: flex;
    justify-content: space-between;
    height: 68px;
}
.pay-head h2 {
    margin: 12px 0 0;
    color: #333;
    font-size: 20px;
    line-height: 23px;
    letter-spacing: .3px;
}
.collapse {
    width: 10px;
    height: 10px;
    margin-top: 14px;
    margin-right: 1px;
}
.pay-opt {
    display: flex;
    gap: 4px;
    font-size: 14px;
    line-height: 16px;
    letter-spacing: .35px;
}
.pay-card b {
    margin-top: -1px;
}
.pay-upi {
    margin-top: 24px;
}
.fee {
    margin: 9px 0 0 18px;
    font-size: 12px;
    line-height: 14px;
    letter-spacing: .33px;
}
.actions {
    display: flex;
    gap: 6px;
    margin-top: 35px;
    padding-left: 18px;
}
.actions button {
    height: 43px;
    font-family: inherit;
    font-size: 15px;
    font-weight: bold;
    padding: 0;
}
.btn-back {
    width: 58px;
    background: #f4f4f4;
    border: 1px solid #a8a8a8;
    color: #000;
}
.btn-continue {
    width: 87px;
    background: #fb7c2c;
    border: none;
    border-radius: 4px;
    color: #fff;
}

/* windows taskbar */
.taskbar {
    height: 48px;
    flex: none;
    display: flex;
    align-items: center;
    background: #2a231b;
    border-top: 1px solid #3a3a36;
    color: #f2f2f2;
    font-family: "Noto Sans", sans-serif;
}
.weather {
    position: relative;
    width: 346px;
    display: flex;
    align-items: center;
    padding-left: 19px;
}
.weather-icon {
    width: 24px;
    height: 24px;
}
.weather-badge {
    position: absolute;
    left: 30px;
    top: -7px;
    width: 16px;
    height: 19px;
    border-radius: 50%;
    background: #f8a0b4;
    color: #222;
    font-size: 10px;
    line-height: 19px;
    text-align: center;
}
.weather-text {
    display: flex;
    flex-direction: column;
    margin-left: 8px;
    font-size: 11px;
    line-height: 16px;
}
.dim {
    color: #cfcfcf;
}
.task-icons {
    display: flex;
}
.task {
    position: relative;
    width: 44px;
    height: 44px;
    display: flex;
    align-items: center;
    justify-content: center;
}
.task-active {
    width: 39px;
    height: 40px;
    margin: 0 2.500px;
    background: #3a342c;
    border-radius: 4px;
}
.ico24 {
    width: 24px;
    height: 24px;
}
.black-square {
    width: 24px;
    height: 24px;
    background: #000;
}
.chrome-badge {
    position: absolute;
    left: 19px;
    top: 0;
    width: 15px;
    height: 15px;
    border-radius: 50%;
    background: #c5330f;
    color: #fde;
    font-size: 8px;
    line-height: 15px;
    text-align: center;
}
.run,
.run-active {
    position: absolute;
    left: 50%;
    height: 3px;
    border-radius: 2px;
}
.run {
    bottom: 3px;
    width: 6px;
    margin-left: -3px;
    background: #8a8a8a;
}
.run-active {
    bottom: 1px;
    width: 16px;
    margin-left: -8px;
    background: #43b3f0;
}
.pc {
    font: bold 8px "Liberation Sans", sans-serif;
    fill: #fff;
}
.zm {
    font: bold 10px "Liberation Sans", sans-serif;
    fill: #fff;
    text-anchor: middle;
}
.tray {
    display: flex;
    align-items: center;
    margin-left: 68px;
    font-size: 11.500px;
}
.tray-chevron {
    width: 12px;
    height: 8px;
}
.tray-sync {
    width: 18px;
    height: 18px;
    margin-left: 17px;
}
.lang {
    width: 30px;
    margin-left: 14px;
    display: flex;
    flex-direction: column;
    align-items: center;
    line-height: 20px;
}
.tray-icon {
    width: 18px;
    height: 16px;
    margin-left: 6px;
}
.lang + .tray-icon {
    margin-left: 14px;
}
.datetime {
    width: 68px;
    margin-left: 10px;
    display: flex;
    flex-direction: column;
    align-items: flex-end;
    font-size: 11.800px;
    line-height: 20px;
}
.tray-bell {
    width: 14px;
    height: 18px;
    margin-left: 8px;
}
```
